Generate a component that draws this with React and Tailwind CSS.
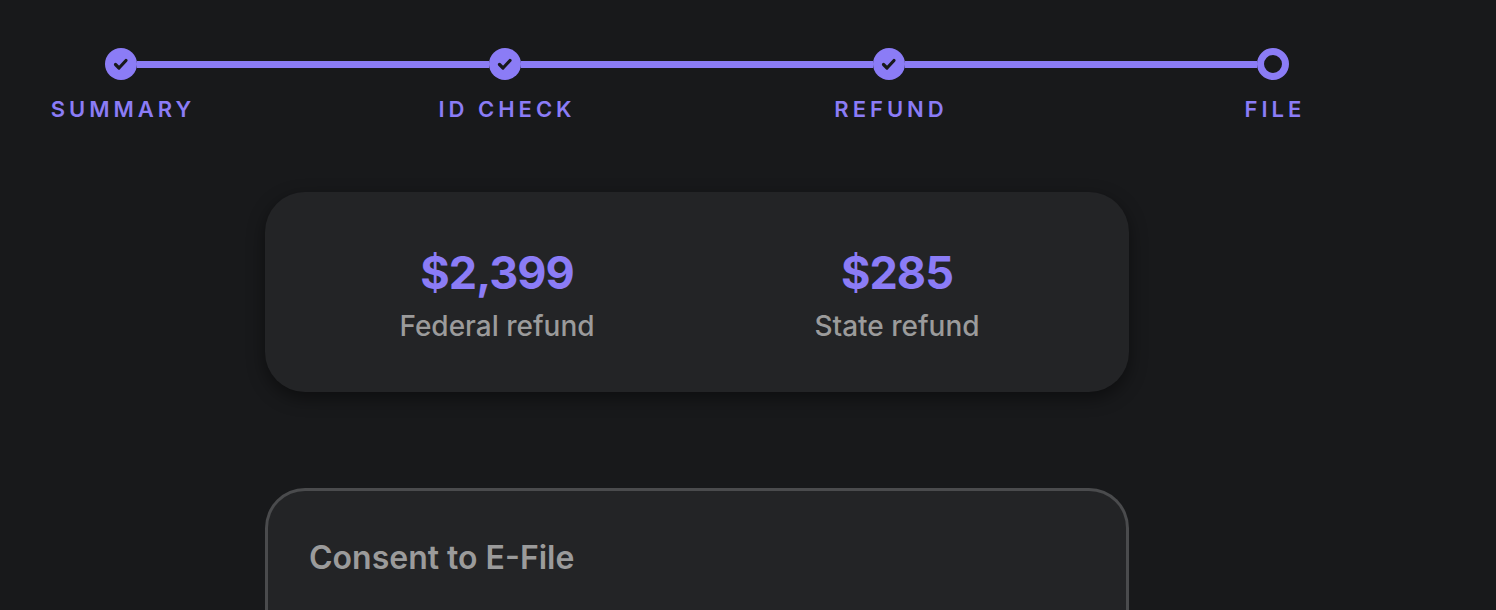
import React from 'react';

const steps = ['SUMMARY', 'ID CHECK', 'REFUND', 'FILE'];

function DoneDot() {
    return (
        <div className="w-8 h-8 rounded-full bg-[#8b7cf6] flex items-center justify-center shrink-0">
            <svg width="18" height="18" viewBox="0 0 18 18" fill="none">
                <path d="M3.5 9.5l3.5 3.5 7-7.5" stroke="#18191b" strokeWidth="3.2" strokeLinecap="round" strokeLinejoin="round" />
            </svg>
        </div>
    );
}

function CurrentDot() {
    return <div className="w-8 h-8 rounded-full border-[7px] border-[#8b7cf6] bg-[#18191b] shrink-0" />;
}

function Refund({ amount, label }) {
    return (
        <div className="flex flex-col items-center pt-[4px]">
            <div className="text-[45px] leading-[56px] font-bold tracking-[-1px] text-[#8b7cf6]">{amount}</div>
            <div className="text-[28px] leading-[34px] font-medium text-[#9b9b9b] mt-[8px]">{label}</div>
        </div>
    );
}

export default function App() {
    return (
        <div className="min-h-screen bg-[#18191b] font-['Inter',sans-serif] overflow-hidden">
            {/* stepper */}
            <div className="pt-[48px] pl-[49px] w-[1345px]">
                <div className="flex items-center px-[56px]">
                    <DoneDot />
                    <div className="flex-1 h-[7px] bg-[#8b7cf6]" />
                    <DoneDot />
                    <div className="flex-1 h-[7px] bg-[#8b7cf6]" />
                    <DoneDot />
                    <div className="flex-1 h-[7px] bg-[#8b7cf6]" />
                    <CurrentDot />
                </div>
                <div className="flex justify-between mt-[16px]">
                    {steps.map((s) => (
                        <div key={s} className="w-[144px] flex justify-center">
                            <span className="whitespace-nowrap mr-[-4px] text-[22px] leading-[26px] font-semibold tracking-[4px] text-[#8b7cf6]">
                                {s}
                            </span>
                        </div>
                    ))}
                </div>
            </div>

            {/* refunds */}
            <div className="ml-[265px] w-[864px] mt-[70px] rounded-[40px] bg-[#232426] shadow-[0_6px_18px_rgba(0,0,0,0.45)] px-[32px] h-[200px] grid grid-cols-2 items-center">
                <Refund amount="$2,399" label="Federal refund" />
                <Refund amount="$285" label="State refund" />
            </div>

            {/* consent */}
            <div className="ml-[265px] w-[864px] mt-[96px] rounded-t-[40px] border-[3px] border-b-0 border-[#4a4b4d] bg-[#232426] h-[140px] px-[41px] pt-[48px]">
                <div className="text-[32px] leading-[38px] font-semibold text-[#9b9b9b]">Consent to E-File</div>
            </div>
        </div>
    );
}
